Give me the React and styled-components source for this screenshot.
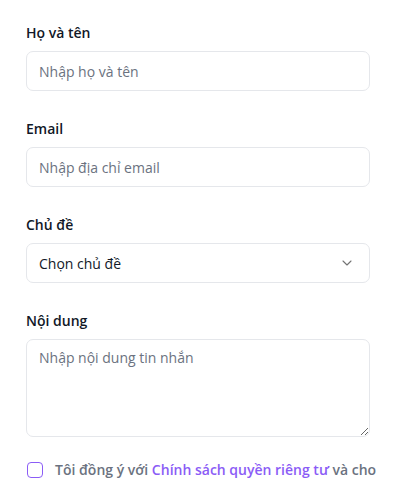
import React from 'react';
import styled, { createGlobalStyle } from 'styled-components';

const GlobalStyle = createGlobalStyle`
    * { box-sizing: border-box; }
    body {
        margin: 0;
        background: #ffffff;
        font-family: "Open Sans", "Noto Sans", Arial, sans-serif;
        color: #111827;
    }
`

const Form = styled.form`
    width: 415px;
    padding: 23px 45px 0 26px;
    display: flex;
    flex-direction: column;
    gap: 28px;
`

const Field = styled.div`
    display: flex;
    flex-direction: column;
    gap: 8px;
`

const Label = styled.label`
    font-size: 14px;
    line-height: 20px;
    font-weight: 600;
    color: #111827;
`

const Input = styled.input`
    height: 40px;
    width: 100%;
    padding: 0 12px;
    border: 1px solid #e5e7eb;
    border-radius: 7px;
    font: inherit;
    font-size: 14px;
    color: #111827;
    outline: none;
    &::placeholder { color: #6b7280; }
`

const SelectBox = styled.div`
    height: 40px;
    display: flex;
    align-items: center;
    justify-content: space-between;
    padding: 0 14px 0 12px;
    border: 1px solid #e5e7eb;
    border-radius: 7px;
    font-size: 14px;
    color: #111827;
`

const TextArea = styled.textarea`
    height: 98px;
    width: 100%;
    padding: 8px 12px;
    border: 1px solid #e5e7eb;
    border-radius: 7px;
    font: inherit;
    font-size: 14px;
    outline: none;
    resize: vertical;
    &::placeholder { color: #6b7280; }
`

const Agree = styled.div`
    display: flex;
    align-items: flex-start;
    gap: 12px;
    margin: -5px -14px 0 0;
    padding-left: 1px;
    font-size: 14px;
    line-height: 20px;
    font-weight: 600;
    color: #6b7280;
`

const Check = styled.input`
    appearance: none;
    flex-shrink: 0;
    margin: 2px 0 0;
    width: 16px;
    height: 16px;
    border: 1.5px solid #8b5cf6;
    border-radius: 4px;
    background: #fff;
`

const Link = styled.a`
    color: #8b5cf6;
    text-decoration: none;
`

const Chevron = () => (
    <svg width="16" height="16" viewBox="0 0 24 24" fill="none" stroke="#737373" strokeWidth="1.6" strokeLinecap="round" strokeLinejoin="round">
        <path d="M6 9l6 6 6-6" />
    </svg>
)

const App = () => {
    return (
        <>
            <GlobalStyle />
            <Form>
                <Field>
                    <Label>Họ và tên</Label>
                    <Input placeholder="Nhập họ và tên" />
                </Field>
                <Field>
                    <Label>Email</Label>
                    <Input placeholder="Nhập địa chỉ email" />
                </Field>
                <Field>
                    <Label>Chủ đề</Label>
                    <SelectBox>
                        <span>Chọn chủ đề</span>
                        <Chevron />
                    </SelectBox>
                </Field>
                <Field>
                    <Label>Nội dung</Label>
                    <TextArea placeholder="Nhập nội dung tin nhắn" />
                </Field>
                <Agree>
                    <Check type="checkbox" />
                    <span>Tôi đồng ý với <Link href="#">Chính sách quyền riêng tư</Link> và cho phép xử lý dữ liệu cá nhân</span>
                </Agree>
            </Form>
        </>
    );
};

export default App;
